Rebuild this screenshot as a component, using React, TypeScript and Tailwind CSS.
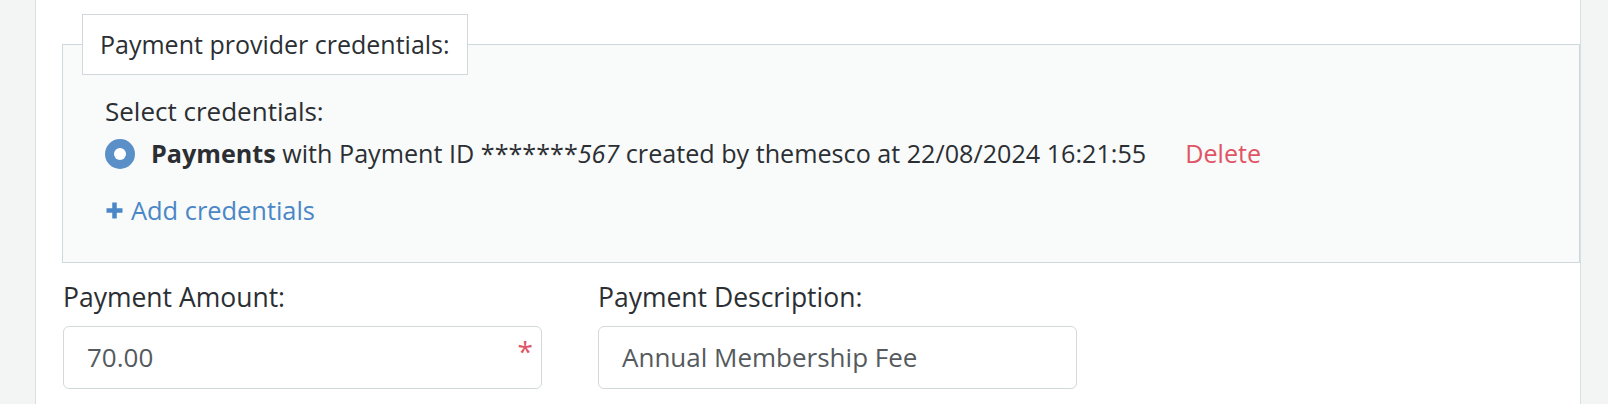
import { FC } from 'react';

const font = { fontFamily: '"Open Sans", "Noto Sans", sans-serif' };

const Field: FC<{ label: string; value: string; required?: boolean }> = ({ label, value, required }) =>
{
    return (
        <div className="flex flex-col w-[479px]">
            <label className="text-[26.5px] leading-[28px] text-[#2b2f33]">{ label }</label>
            <div className="relative mt-[15px] h-[63px] flex items-center rounded-[6px] border border-[#d3d8db] bg-white pl-[23px] pr-[40px]">
                <span className="text-[26px] text-[#555a5e]">{ value }</span>
                { required &&
                    <span className="absolute right-[8px] top-[10px] text-[28px] leading-none text-[#e05564]">*</span> }
            </div>
        </div>
    );
};

export default function App()
{
    return (
        <div className="flex w-[1608px] h-[404px] overflow-hidden bg-white" style={ font }>
            <div className="w-[36px] shrink-0 bg-[#f3f5f5] border-r border-[#d8dfe0]" />
            <div className="flex-1 pl-[26px] pt-[14px]">
                <fieldset className="border border-[#cfd8da] bg-[#f9fafa] pb-[38px]">
                    <legend className="ml-[19px] h-[61px] flex items-center px-[17px] border border-[#cfd8da] bg-white text-[25px] text-[#2b2f33]">
                        Payment provider credentials:
                    </legend>
                    <div className="pl-[42px] pt-[22px] text-[25.15px] text-[#2b2f33]">
                        <div className="text-[26px] leading-[28px] mb-[13px]">Select credentials:</div>
                        <div className="flex items-center h-[32px]">
                            <span className="w-[30px] h-[30px] rounded-full bg-[#5a8fc8] flex items-center justify-center shrink-0">
                                <span className="w-[12px] h-[12px] rounded-full bg-white" />
                            </span>
                            <span className="ml-[16px] whitespace-nowrap">
                                <b className="font-bold">Payments</b> with Payment ID *******<i>567</i> created by themesco at 22/08/2024 16:21:55
                            </span>
                            <span className="ml-[39px] text-[#e05564] cursor-pointer">Delete</span>
                        </div>
                        <div className="mt-[26px] flex items-center leading-[28px] text-[#4a87c6] cursor-pointer">
                            <svg width="19" height="19" viewBox="0 0 19 19" className="mr-[7px]">
                                <path d="M9.5 1.5v16M1.5 9.5h16" stroke="currentColor" strokeWidth="4.5" />
                            </svg>
                            <span className="text-[25.4px]">Add credentials</span>
                        </div>
                    </div>
                </fieldset>
                <div className="flex gap-[56px] mt-[20px] pl-[1px]">
                    <Field label="Payment Amount:" value="70.00" required />
                    <Field label="Payment Description:" value="Annual Membership Fee" />
                </div>
            </div>
            <div className="w-[28px] shrink-0 bg-[#f3f5f5] border-l border-[#d8dfe0]" />
        </div>
    );
}
